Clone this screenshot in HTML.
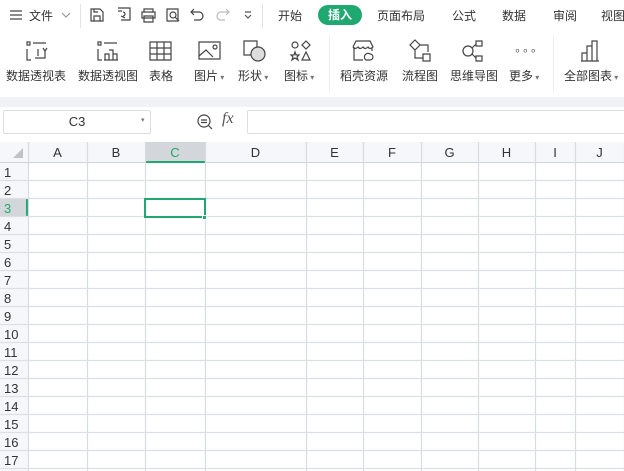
<!DOCTYPE html>
<html><head><meta charset="utf-8"><style>
*{margin:0;padding:0;box-sizing:border-box}
body{width:624px;height:471px;overflow:hidden;background:#fff;font-family:"Liberation Sans","Noto Sans CJK SC",sans-serif;font-size:12px;color:#333;position:relative}
.a{position:absolute;white-space:nowrap}
svg{position:absolute;fill:none;stroke:#444;stroke-width:1.2}
.lbl{position:absolute;font-size:12px;color:#333;top:67px;white-space:nowrap}
.tab{position:absolute;top:7px;font-size:12px;color:#333;white-space:nowrap}
</style></head><body>
<div class="a" style="left:0;top:0;width:624px;height:32px;background:#fff"></div>
<svg style="left:9px;top:9px" width="14" height="12"><path d="M1 2H13M1 6H13M1 10H13"/></svg>
<div class="a" style="left:29px;top:7px">文件</div>
<svg style="left:61px;top:12px" width="10" height="6"><path d="M1 1L5 5L9 1" stroke="#999"/></svg>
<div class="a" style="left:80px;top:4px;width:1px;height:24px;background:#e3e3e3"></div>
<svg style="left:89px;top:7px" width="16" height="16"><path d="M2 2H11L14 5V14H2Z M5 14V9H11V14 M5 2V5H9"/></svg>
<svg style="left:116px;top:6px" width="16" height="17"><path d="M2 2H14V14H5 M2 5H6 M7 6a2 2 0 1 1 0 4 M5 10L9 12"/></svg>
<svg style="left:140px;top:7px" width="17" height="16"><path d="M4 5V2H13V5 M2 5H15V11H2Z M4 9H13V15H4Z"/></svg>
<svg style="left:165px;top:7px" width="17" height="16"><path d="M2 2H13V14H2Z"/><circle cx="8" cy="8" r="3"/><path d="M10 10L14 14"/></svg>
<svg style="left:190px;top:7px" width="15" height="15"><path d="M4 2L1 5L4 8 M1 5H9a4 4 0 0 1 0 8H4"/></svg>
<svg style="left:215px;top:7px" width="15" height="15"><path d="M11 2L14 5L11 8 M14 5H6a4 4 0 0 0 0 8H10" stroke="#bbb"/></svg>
<svg style="left:243px;top:10px" width="10" height="10"><path d="M2 2H8 M2 5L5 8L8 5" stroke="#555"/></svg>
<div class="a" style="left:262px;top:4px;width:1px;height:24px;background:#e3e3e3"></div>
<div class="tab" style="left:278px">开始</div>
<div class="a" style="left:318px;top:5px;width:44px;height:20px;border-radius:10px;background:#1fa971;color:#fff;font-weight:bold;text-align:center;line-height:20px">插入</div>
<div class="tab" style="left:377px">页面布局</div>
<div class="tab" style="left:452px">公式</div>
<div class="tab" style="left:502px">数据</div>
<div class="tab" style="left:553px">审阅</div>
<div class="tab" style="left:601px">视图</div>
<svg style="left:25px;top:40px" width="24" height="22"><path d="M2 2H5V5H2Z M8 3H21 M2 9V20H6 M13 9V16 M10 18H20V11 M18 8L20 11L22 8"/></svg>
<svg style="left:96px;top:40px" width="24" height="22"><path d="M2 2H5V5H2Z M8 3H21 M2 9V20H6 M9 20V14H13V20 M13 10H17V20 M17 14H21V20 M8 20H22"/></svg>
<svg style="left:149px;top:41px" width="24" height="20"><path d="M1 1H22V19H1Z M1 7H22 M1 13H22 M8 1V19 M15 1V19"/></svg>
<svg style="left:198px;top:41px" width="24" height="20"><path d="M1 1H22V18H1Z M1 15L8 9L15 16" /><circle cx="17" cy="6" r="2"/></svg>
<svg style="left:242px;top:39px" width="26" height="24"><path d="M2 2H15V16H2Z"/><circle cx="16" cy="15" r="7" fill="#ddd"/></svg>
<svg style="left:289px;top:40px" width="24" height="22"><circle cx="6" cy="5" r="3"/><path d="M17 1L21 5L17 9L13 5Z M6 12L7 15H10L8 17L9 20L6 18L3 20L4 17L2 15H5Z M17 12L21 20H13Z"/></svg>
<div class="a" style="left:329px;top:36px;width:1px;height:56px;background:#eee"></div>
<svg style="left:351px;top:39px" width="26" height="24"><path d="M3 8V21H12 M21 8V12 M2 8L5 2H19L22 8Q19 11 17 8Q14 11 12 8Q9 11 7 8Q4 11 2 8"/><path d="M15 21a3 3 0 0 1 4-6a3 3 0 0 1 0 6Z"/></svg>
<svg style="left:408px;top:39px" width="26" height="24"><path d="M7 1L12 6L7 11L2 6Z M7 11V19H15 M12 6H20V13" /><path d="M15 15H22V22H15Z"/></svg>
<svg style="left:460px;top:39px" width="28" height="24"><circle cx="8" cy="12" r="5"/><path d="M16 2H22V7H16Z M16 17H22V22H16Z M12 9L16 5 M12 15L16 19"/></svg>
<div class="a" style="left:514px;top:44px;font-size:11px;color:#555;letter-spacing:1px">∘∘∘</div>
<div class="a" style="left:553px;top:36px;width:1px;height:56px;background:#eee"></div>
<svg style="left:580px;top:39px" width="24" height="24"><path d="M2 22V14H7V22 M7 22V7H12V22 M12 22V2H17V22 M1 22H19"/></svg>
<div class="lbl" style="left:6px">数据透视表</div>
<div class="lbl" style="left:78px">数据透视图</div>
<div class="lbl" style="left:149px">表格</div>
<div class="lbl" style="left:194px">图片<span style="font-size:8px;color:#777"> ▾</span></div>
<div class="lbl" style="left:238px">形状<span style="font-size:8px;color:#777"> ▾</span></div>
<div class="lbl" style="left:284px">图标<span style="font-size:8px;color:#777"> ▾</span></div>
<div class="lbl" style="left:340px">稻壳资源</div>
<div class="lbl" style="left:402px">流程图</div>
<div class="lbl" style="left:450px">思维导图</div>
<div class="lbl" style="left:509px">更多<span style="font-size:8px;color:#777"> ▾</span></div>
<div class="lbl" style="left:564px">全部图表<span style="font-size:8px;color:#777"> ▾</span></div>
<div class="a" style="left:0;top:97px;width:624px;height:10px;background:#f0f2f5"></div>
<div class="a" style="left:3px;top:110px;width:148px;height:24px;border:1px solid #ddd;border-radius:2px;text-align:center;line-height:22px;font-size:13px;color:#333">C3</div>
<div class="a" style="left:141px;top:116px;font-size:7px;color:#777">▾</div>
<svg style="left:196px;top:113px" width="18" height="18"><circle cx="8" cy="8" r="6"/><path d="M5 7H11M5 9.5H11M12.5 12.5L16 16"/></svg>
<div class="a" style="left:222px;top:110px;font-family:'Liberation Serif',serif;font-style:italic;font-size:16px;color:#555">fx</div>
<div class="a" style="left:247px;top:110px;width:380px;height:24px;border:1px solid #ddd;border-radius:2px"></div>
<div class="a" style="left:0;top:142px;width:624px;height:21px;background:#f5f7fa;border-bottom:1px solid #cfd4da"></div>
<div class="a" style="left:0;top:163px;width:28px;height:308px;background:#f5f7fa"></div>
<div class="a" style="left:145px;top:142px;width:60px;height:21px;background:#d3d6da;border-bottom:2px solid #1fa971"></div>
<div class="a" style="left:0;top:199px;width:28px;height:18px;background:#d3d6da;border-right:2px solid #1fa971"></div>
<svg style="left:12px;top:147px" width="12" height="12"><path d="M11 1V11H1Z" fill="#bfc3c8" stroke="none"/></svg>
<svg style="left:0;top:142px;stroke:none" width="624" height="329" id="g"></svg>
<div id="labels"></div>
<div class="a" style="left:144px;top:198px;width:62px;height:20px;border:2px solid #1fa971"></div>
<div class="a" style="left:202px;top:215px;width:5px;height:5px;background:#1fa971;border:1px solid #fff"></div>
<script>
var cols=[28,87,145,205,306,363,421,478,535,575,624],names="ABCDEFGHIJ";
var s="",L="";
for(var i=0;i<cols.length;i++){var x=cols[i]+0.5;s+='<line x1="'+x+'" y1="0" x2="'+x+'" y2="329" stroke="#d8dce0"/>';}
for(var r=1;r<=17;r++){var y=21+r*18-0.5;s+='<line x1="0" y1="'+y+'" x2="624" y2="'+y+'" stroke="#dcdfe3"/>';
L+='<div class="a" style="left:4px;top:'+(163+(r-1)*18+1)+'px;font-size:13px;line-height:17px;color:'+(r==3?'#1fa971':'#333')+'">'+r+'</div>';}
for(var i=0;i<10;i++){L+='<div class="a" style="left:'+cols[i]+'px;width:'+(cols[i+1]-cols[i])+'px;text-align:center;top:144px;font-size:13px;line-height:17px;color:'+(i==2?'#1fa971':'#333')+'">'+names[i]+'</div>';}
document.getElementById('g').innerHTML=s;document.getElementById('labels').innerHTML=L;
</script>
</body></html>
